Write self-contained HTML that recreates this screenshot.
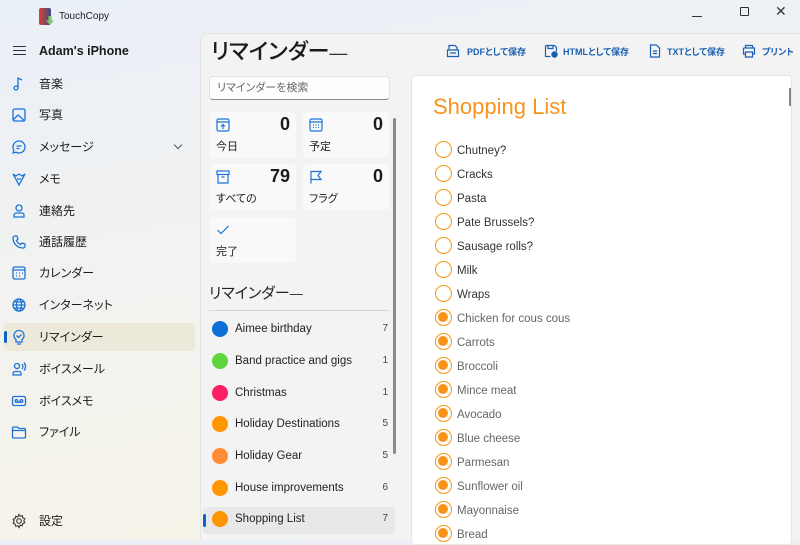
<!DOCTYPE html>
<html><head><meta charset="utf-8"><style>
*{margin:0;padding:0;box-sizing:border-box}
body{width:800px;height:540px;overflow:hidden;font-family:"Segoe UI","Liberation Sans","Noto Sans CJK JP",sans-serif;font-feature-settings:"palt";background:linear-gradient(170deg,#eaf0f8 0%,#f2f2f0 45%,#f8f4e6 100%);position:relative;color:#1b1b1b}
.abs{position:absolute}
.nav{position:absolute;left:39px;font-size:12px;color:#1b1b1b;line-height:16px;margin-top:-8px}
.ic{position:absolute;left:11px;width:16px;height:16px;margin-top:-8px}
.main{position:absolute;left:200px;top:33px;width:600px;height:507px;background:#f3f3f3;border-top-left-radius:8px;border-left:1px solid #e5e5e5;border-top:1px solid #e5e5e5}
.tile{position:absolute;background:#f9f9f9;border-radius:4px;width:86px;height:46px}
.tile .n{position:absolute;right:6px;top:2px;font-size:18px;font-weight:600}
.tile .l{position:absolute;left:6px;top:26px;font-size:11px}
.tile svg{position:absolute;left:6px;top:6px}
.li{position:absolute;left:212px;font-size:11.5px;color:#222;margin-top:-10px;width:180px;height:20px;line-height:20px}
.li .d{position:absolute;left:0;top:2px;width:16px;height:16px;border-radius:50%}
.li .t{position:absolute;left:23px;top:0}
.li .c{position:absolute;right:4px;top:0;font-size:10px;color:#444}
.it{position:absolute;left:435px;font-size:11.5px;margin-top:-9px;height:18px;line-height:18px;color:#333}
.it .o{position:absolute;left:0;top:0;width:17px;height:17px;border-radius:50%;border:1.5px solid #f7941d}
.it .o.f::after{content:"";position:absolute;left:2px;top:2px;width:10px;height:10px;border-radius:50%;background:#f7941d}
.it .t{position:absolute;left:22px;top:1px;white-space:nowrap}
.tb{position:absolute;top:45px;font-size:9px;color:#1a5fb4;font-weight:600;white-space:nowrap;line-height:14px}
</style></head><body>
<div class="abs" style="left:39px;top:8px;width:12px;height:17px;border-radius:2px;background:linear-gradient(90deg,#d9412b,#3a4a8c)"></div>
<div class="abs" style="left:46px;top:16px;width:8px;height:9px;background:#7bc96f;clip-path:polygon(30% 0,70% 0,70% 50%,100% 50%,50% 100%,0 50%,30% 50%)"></div>
<div class="abs" style="left:59px;top:11px;font-size:10px">TouchCopy</div>
<div class="abs" style="left:692px;top:16px;width:10px;height:1px;background:#333"></div>
<div class="abs" style="left:740px;top:7px;width:9px;height:9px;border:1px solid #333;border-radius:1px"></div>
<div class="abs" style="left:775px;top:3px;font-size:14px;color:#333">✕</div>
<div class="abs" style="left:13px;top:46px;width:13px;height:1.3px;background:#333;box-shadow:0 4px 0 #333,0 8px 0 #333"></div>
<div class="nav" style="top:51px;font-weight:600;font-size:12.5px">Adam's iPhone</div>
<svg class="ic" style="top:84px" viewBox="0 0 16 16" fill="none" stroke="#1a73d9" stroke-width="1.3"><circle cx="5" cy="12" r="2"/><path d="M7 12V2l4 2"/></svg><div class="nav" style="top:84px">音楽</div>
<svg class="ic" style="top:115px" viewBox="0 0 16 16" fill="none" stroke="#1a73d9" stroke-width="1.3"><rect x="2" y="2" width="12" height="12" rx="1.5"/><path d="M2 13l5-5 7 6M10 5.5h.1"/></svg><div class="nav" style="top:115px">写真</div>
<svg class="ic" style="top:147px" viewBox="0 0 16 16" fill="none" stroke="#1a73d9" stroke-width="1.3"><path d="M8 2a6 6 0 1 1-3 11.2L2 14l.8-3A6 6 0 0 1 8 2zM5.5 7h5M5.5 9.5h3"/></svg><div class="nav" style="top:147px">メッセージ</div>
<div class="abs" style="left:175px;top:142px;width:6px;height:6px;border-right:1.2px solid #555;border-bottom:1.2px solid #555;transform:rotate(45deg)"></div>
<svg class="ic" style="top:179px" viewBox="0 0 16 16" fill="none" stroke="#1a73d9" stroke-width="1.3"><path d="M2 3l6 11 6-11M2 3l3 2 3-2 3 2 3-2M6 8h4"/></svg><div class="nav" style="top:179px">メモ</div>
<svg class="ic" style="top:211px" viewBox="0 0 16 16" fill="none" stroke="#1a73d9" stroke-width="1.3"><circle cx="8" cy="5" r="3"/><path d="M3 14v-2a2 2 0 0 1 2-2h6a2 2 0 0 1 2 2v2z"/></svg><div class="nav" style="top:211px">連絡先</div>
<svg class="ic" style="top:242px" viewBox="0 0 16 16" fill="none" stroke="#1a73d9" stroke-width="1.3"><path d="M4 2l2 0 1 3-1.5 1.5a8 8 0 0 0 4 4L11 9l3 1v2a2 2 0 0 1-2 2A10 10 0 0 1 2 4a2 2 0 0 1 2-2z"/></svg><div class="nav" style="top:242px">通話履歴</div>
<svg class="ic" style="top:273px" viewBox="0 0 16 16" fill="none" stroke="#1a73d9" stroke-width="1.3"><rect x="2" y="2" width="12" height="12" rx="1.5"/><path d="M2 5h12M5 8h1M8 8h1M11 8h1M5 11h1M8 11h1"/></svg><div class="nav" style="top:273px">カレンダー</div>
<svg class="ic" style="top:305px" viewBox="0 0 16 16" fill="none" stroke="#1a73d9" stroke-width="1.3"><circle cx="8" cy="8" r="6"/><ellipse cx="8" cy="8" rx="2.5" ry="6"/><path d="M2 8h12M3 5h10M3 11h10"/></svg><div class="nav" style="top:305px">インターネット</div>
<div class="abs" style="left:4px;top:323px;width:191px;height:28px;background:#ece8da;border-radius:4px"></div>
<div class="abs" style="left:4px;top:331px;width:3px;height:12px;background:#0f62c6;border-radius:2px"></div>
<svg class="ic" style="top:337px" viewBox="0 0 16 16" fill="none" stroke="#1a73d9" stroke-width="1.3"><path d="M8 1.5a5 5 0 0 1 3 9V13H5v-2.5a5 5 0 0 1 3-9zM6 15h4M5.5 6.5l2 2 3-3"/></svg><div class="nav" style="top:337px">リマインダー</div>
<svg class="ic" style="top:369px" viewBox="0 0 16 16" fill="none" stroke="#1a73d9" stroke-width="1.3"><circle cx="6" cy="5" r="2.5"/><path d="M2 14v-1.5A2 2 0 0 1 4 10.5h4a2 2 0 0 1 2 2V14zM11 3a4 4 0 0 1 0 5M13 1.5a6 6 0 0 1 0 8"/></svg><div class="nav" style="top:369px">ボイスメール</div>
<svg class="ic" style="top:401px" viewBox="0 0 16 16" fill="none" stroke="#1a73d9" stroke-width="1.3"><rect x="1.5" y="3.5" width="13" height="9" rx="1.5"/><circle cx="5.5" cy="8" r="1.3"/><circle cx="10.5" cy="8" r="1.3"/><path d="M5.5 9.3h5"/></svg><div class="nav" style="top:401px">ボイスメモ</div>
<svg class="ic" style="top:432px" viewBox="0 0 16 16" fill="none" stroke="#1a73d9" stroke-width="1.3"><path d="M1.5 4a1 1 0 0 1 1-1h4l1.5 1.5h5.5a1 1 0 0 1 1 1V13a1 1 0 0 1-1 1h-11a1 1 0 0 1-1-1zM1.5 6.5h13"/></svg><div class="nav" style="top:432px">ファイル</div>
<svg class="ic" style="top:521px" viewBox="0 0 16 16" fill="none" stroke="#444" stroke-width="1.2"><circle cx="8" cy="8" r="2.3"/><path d="M8 1.5l1.2 1.8 2.1-.6.5 2.1 2 .9-.9 2 .9 2-2 .9-.5 2.1-2.1-.6L8 14.5l-1.2-1.8-2.1.6-.5-2.1-2-.9.9-2-.9-2 2-.9.5-2.1 2.1.6z"/></svg><div class="nav" style="top:521px">設定</div>

<div class="main"></div>
<div class="abs" style="left:211px;top:38px;font-size:22px;font-weight:500;line-height:28px;white-space:nowrap">リマインダー<span style="font-weight:300;font-size:18px;color:#333">—</span></div>
<svg class="abs" style="left:446px;top:44px" width="14" height="14" viewBox="0 0 14 14" fill="none" stroke="#1a5fb4" stroke-width="1.2"><path d="M3 6V1.5h6l2 2V6M1.5 6h11v6.5h-11zM4 9h6"/></svg><div class="tb" style="left:467px">PDFとして保存</div>
<svg class="abs" style="left:544px;top:44px" width="14" height="14" viewBox="0 0 14 14" fill="none" stroke="#1a5fb4" stroke-width="1.2"><path d="M1.5 1.5h9l2 2v4M1.5 1.5v11h5M4 1.5v3h5v-3"/><circle cx="10.5" cy="10.5" r="2.6" fill="#1a5fb4"/></svg><div class="tb" style="left:563px">HTMLとして保存</div>
<svg class="abs" style="left:648px;top:44px" width="14" height="14" viewBox="0 0 14 14" fill="none" stroke="#1a5fb4" stroke-width="1.2"><path d="M2.5 1h6l3 3v9h-9zM5 7h4M5 9.5h4"/></svg><div class="tb" style="left:667px">TXTとして保存</div>
<svg class="abs" style="left:742px;top:44px" width="14" height="14" viewBox="0 0 14 14" fill="none" stroke="#1a5fb4" stroke-width="1.2"><path d="M3.5 4V1.5h7V4M1.5 4h11v6h-2M3.5 10h-2V4M3.5 8h7v5h-7z"/></svg><div class="tb" style="left:762px">プリント</div>
<div class="abs" style="left:209px;top:76px;width:181px;height:24px;background:#fdfdfd;border:1px solid #e3e3e3;border-bottom:1px solid #888;border-radius:4px;font-size:11px;color:#666;padding:0 7px;line-height:22px">リマインダーを検索</div>
<div class="tile" style="left:210px;top:112px"><svg width="14" height="14" viewBox="0 0 14 14" fill="none" stroke="#1a73d9" stroke-width="1.2"><rect x="1" y="1" width="12" height="12" rx="1.5"/><path d="M1 4h12M7 11V6.5M5 8.5l2-2 2 2"/></svg><span class="n">0</span><span class="l">今日</span></div>
<div class="tile" style="left:303px;top:112px"><svg width="14" height="14" viewBox="0 0 14 14" fill="none" stroke="#1a73d9" stroke-width="1.2"><rect x="1" y="1" width="12" height="12" rx="1.5"/><path d="M1 4h12M4 7h1M6.5 7h1M9 7h1M4 9.5h1M6.5 9.5h1M9 9.5h1"/></svg><span class="n">0</span><span class="l">予定</span></div>
<div class="tile" style="left:210px;top:164px"><svg width="14" height="14" viewBox="0 0 14 14" fill="none" stroke="#1a73d9" stroke-width="1.2"><rect x="1" y="1" width="12" height="3.5"/><path d="M2 4.5v8.5h10V4.5M5.5 7h3"/></svg><span class="n">79</span><span class="l">すべての</span></div>
<div class="tile" style="left:303px;top:164px"><svg width="14" height="14" viewBox="0 0 14 14" fill="none" stroke="#1a73d9" stroke-width="1.2"><path d="M2 13.5V1.5h10l-3 4 3 4H2"/></svg><span class="n">0</span><span class="l">フラグ</span></div>
<div class="tile" style="left:210px;top:217px"><svg width="14" height="14" viewBox="0 0 14 14" fill="none" stroke="#1a73d9" stroke-width="1.2"><path d="M1.5 7l3.5 3.5 7.5-7.5"/></svg><span class="l">完了</span></div>
<div class="abs" style="left:393px;top:118px;width:3px;height:336px;background:#8a8a8a;border-radius:2px"></div>
<div class="abs" style="left:209px;top:284px;font-size:15px;color:#222;line-height:20px;white-space:nowrap">リマインダー<span style="font-weight:300;font-size:13px">—</span></div>
<div class="abs" style="left:209px;top:310px;width:180px;height:1px;background:#d5d5d5"></div>
<div class="abs" style="left:203px;top:507px;width:192px;height:27px;background:#e8e8e8;border-radius:4px"></div>
<div class="abs" style="left:203px;top:514px;width:3px;height:13px;background:#0f62c6;border-radius:2px"></div>
<div class="li" style="top:329px"><span class="d" style="background:#0a6fd6"></span><span class="t">Aimee birthday</span><span class="c">7</span></div>
<div class="li" style="top:361px"><span class="d" style="background:#5fd43e"></span><span class="t">Band practice and gigs</span><span class="c">1</span></div>
<div class="li" style="top:393px"><span class="d" style="background:#fa2063"></span><span class="t">Christmas</span><span class="c">1</span></div>
<div class="li" style="top:424px"><span class="d" style="background:#ff9500"></span><span class="t">Holiday Destinations</span><span class="c">5</span></div>
<div class="li" style="top:456px"><span class="d" style="background:#ff8c33"></span><span class="t">Holiday Gear</span><span class="c">5</span></div>
<div class="li" style="top:488px"><span class="d" style="background:#ff9500"></span><span class="t">House improvements</span><span class="c">6</span></div>
<div class="li" style="top:519px"><span class="d" style="background:#ff9500"></span><span class="t">Shopping List</span><span class="c">7</span></div>
<div class="abs" style="left:411px;top:75px;width:381px;height:470px;background:#fff;border:1px solid #e6e6e6;border-radius:4px"></div>
<div class="abs" style="left:789px;top:88px;width:2px;height:18px;background:#888"></div>
<div class="abs" style="left:433px;top:93px;font-size:22px;color:#f7941d;line-height:28px">Shopping List</div>
<div class="it" style="top:150px"><span class="o"></span><span class="t">Chutney?</span></div>
<div class="it" style="top:174px"><span class="o"></span><span class="t">Cracks</span></div>
<div class="it" style="top:198px"><span class="o"></span><span class="t">Pasta</span></div>
<div class="it" style="top:222px"><span class="o"></span><span class="t">Pate Brussels?</span></div>
<div class="it" style="top:246px"><span class="o"></span><span class="t">Sausage rolls?</span></div>
<div class="it" style="top:270px"><span class="o"></span><span class="t">Milk</span></div>
<div class="it" style="top:294px"><span class="o"></span><span class="t">Wraps</span></div>
<div class="it" style="top:318px;color:#666"><span class="o f"></span><span class="t">Chicken for cous cous</span></div>
<div class="it" style="top:342px;color:#666"><span class="o f"></span><span class="t">Carrots</span></div>
<div class="it" style="top:366px;color:#666"><span class="o f"></span><span class="t">Broccoli</span></div>
<div class="it" style="top:390px;color:#666"><span class="o f"></span><span class="t">Mince meat</span></div>
<div class="it" style="top:414px;color:#666"><span class="o f"></span><span class="t">Avocado</span></div>
<div class="it" style="top:438px;color:#666"><span class="o f"></span><span class="t">Blue cheese</span></div>
<div class="it" style="top:462px;color:#666"><span class="o f"></span><span class="t">Parmesan</span></div>
<div class="it" style="top:486px;color:#666"><span class="o f"></span><span class="t">Sunflower oil</span></div>
<div class="it" style="top:510px;color:#666"><span class="o f"></span><span class="t">Mayonnaise</span></div>
<div class="it" style="top:534px;color:#666"><span class="o f"></span><span class="t">Bread</span></div>
</body></html>
